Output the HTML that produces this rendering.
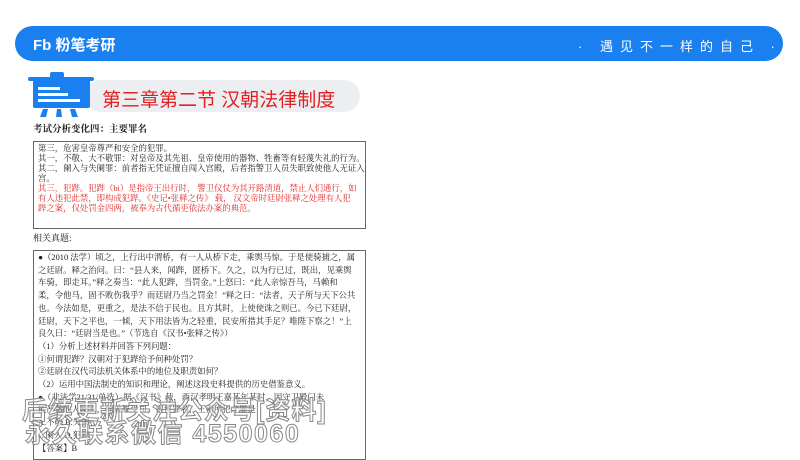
<!DOCTYPE html>
<html><head><meta charset="utf-8"><style>
*{margin:0;padding:0;box-sizing:border-box}
body{width:800px;height:450px;overflow:hidden;background:#fff;position:relative;font-family:"Liberation Serif","Noto Serif CJK SC",serif;color:#222}
.hdr{position:absolute;left:15px;top:26px;width:768px;height:35px;background:#1a80f0;border-radius:18px}
.logo{position:absolute;left:33px;top:34px;color:#fff;font:bold 15px "Liberation Sans","Noto Sans CJK SC",sans-serif}
.slogan{position:absolute;left:578px;top:36px;color:#fff;font:13px "Liberation Sans","Noto Sans CJK SC",sans-serif;letter-spacing:7px}
.pill{position:absolute;left:85px;top:80px;width:275px;height:32px;background:#eceef2;border-radius:16px}
.title{position:absolute;left:102px;top:85px;color:#e22020;font:19px "Liberation Sans","Noto Sans CJK SC",sans-serif}
.sub{position:absolute;left:33px;top:121px;font-weight:bold;font-size:9.5px}
.box{position:absolute;left:33px;width:333px;border:1px solid #666;font-size:8.4px;padding:2px 4px;white-space:nowrap;overflow:hidden}
.b1{top:141px;height:88px;line-height:10px;padding-top:2px}
.b2{top:250px;height:210px;line-height:12.7px;padding-top:1px}
.red{color:#e02828}
.rel{position:absolute;left:33px;top:231px;font-size:9px}
.wm{position:absolute;font:bold 25px "Liberation Sans","Noto Sans CJK SC",sans-serif;color:rgba(255,255,255,0.5);-webkit-text-stroke:1px #888;white-space:nowrap}
</style></head><body>
<div class="hdr"></div>
<div class="logo">Fb 粉笔考研</div>
<div class="slogan">· 遇见不一样的自己 ·</div>
<div class="pill"></div>
<svg style="position:absolute;left:26px;top:70px" width="72" height="48">
<rect x="24" y="2" width="14" height="6" rx="2" fill="#1a80f0"/>
<rect x="2" y="7" width="66" height="4" rx="2" fill="#1a80f0"/>
<rect x="7" y="10" width="57" height="28" rx="2" fill="#1a80f0"/>
<rect x="12" y="17" width="22" height="3" fill="#fff"/>
<rect x="12" y="23" width="30" height="3" fill="#fff"/>
<rect x="12" y="29" width="42" height="3" fill="#fff"/>
<path d="M17 39 L14 47 L20 47 L22 39Z M31 39 L30 47 L36 47 L35 39Z M44 39 L46 47 L52 47 L49 39Z" fill="#1a80f0"/>
</svg>
<div class="title">第三章第二节 汉朝法律制度</div>
<div class="sub">考试分析变化四：主要罪名</div>
<div class="box b1">第三，危害皇帝尊严和安全的犯罪。<br>其一，不敬、大不敬罪：对皇帝及其先祖、皇帝使用的器物、牲畜等有轻蔑失礼的行为。<br>其二，阑入与失阑罪：前者指无凭证擅自闯入宫殿，后者指警卫人员失职致使他人无证入<br>宫。<br><span class="red">其三，犯跸。犯跸（bi）是指帝王出行时， 警卫仪仗为其开路清道，禁止人们通行，如<br>有人违犯此禁，即构成犯跸。《史记•张释之传》 载， 汉文帝时廷尉张释之处理有人犯<br>跸之案，仅处罚金四两，被奉为古代循吏依法办案的典范。</span></div>
<div class="rel">相关真题:</div>
<div class="box b2">●（2010 法学）顷之，上行出中渭桥，有一人从桥下走，乘舆马惊。于是使骑捕之，属<br>之廷尉。释之治问。曰：“县人来，闻跸，匿桥下。久之，以为行已过，既出，见乘舆<br>车骑，即走耳。”释之奏当：“此人犯跸，当罚金。”上怒曰：“此人亲惊吾马，马赖和<br>柔，令他马，固不败伤我乎？而廷尉乃当之罚金！”释之曰：“法者，天子所与天下公共<br>也。今法如是，更重之，是法不信于民也。且方其时，上使使诛之则已。今已下廷尉，<br>廷尉，天下之平也，一倾，天下用法皆为之轻重，民安所措其手足？唯陛下察之！”上<br>良久曰：“廷尉当是也。”（节选自《汉书•张释之传》）<br>（1）分析上述材料并回答下列问题：<br>①何谓犯跸？汉朝对于犯跸给予何种处罚？<br>②廷尉在汉代司法机关体系中的地位及职责如何？<br>（2）运用中国法制史的知识和理论，阐述这段史料提供的历史借鉴意义。<br>●（非法学21/31/单选）据《汉书》载，西汉孝明王嘉某年某时，因守卫殿门未<br>能严禁他人闯入，而被罪受罚，则该罪名，王嘉所犯之罪是<br>A.不敬 B.失阑<br>C.阑入 D.犯跸<br>【答案】B</div>
<div class="wm" style="left:22px;top:391px;letter-spacing:1px">后续更新关注公众号[资料]</div>
<div class="wm" style="left:25px;top:414px;letter-spacing:1.5px">永久联系微信 4550060</div>
</body></html>
